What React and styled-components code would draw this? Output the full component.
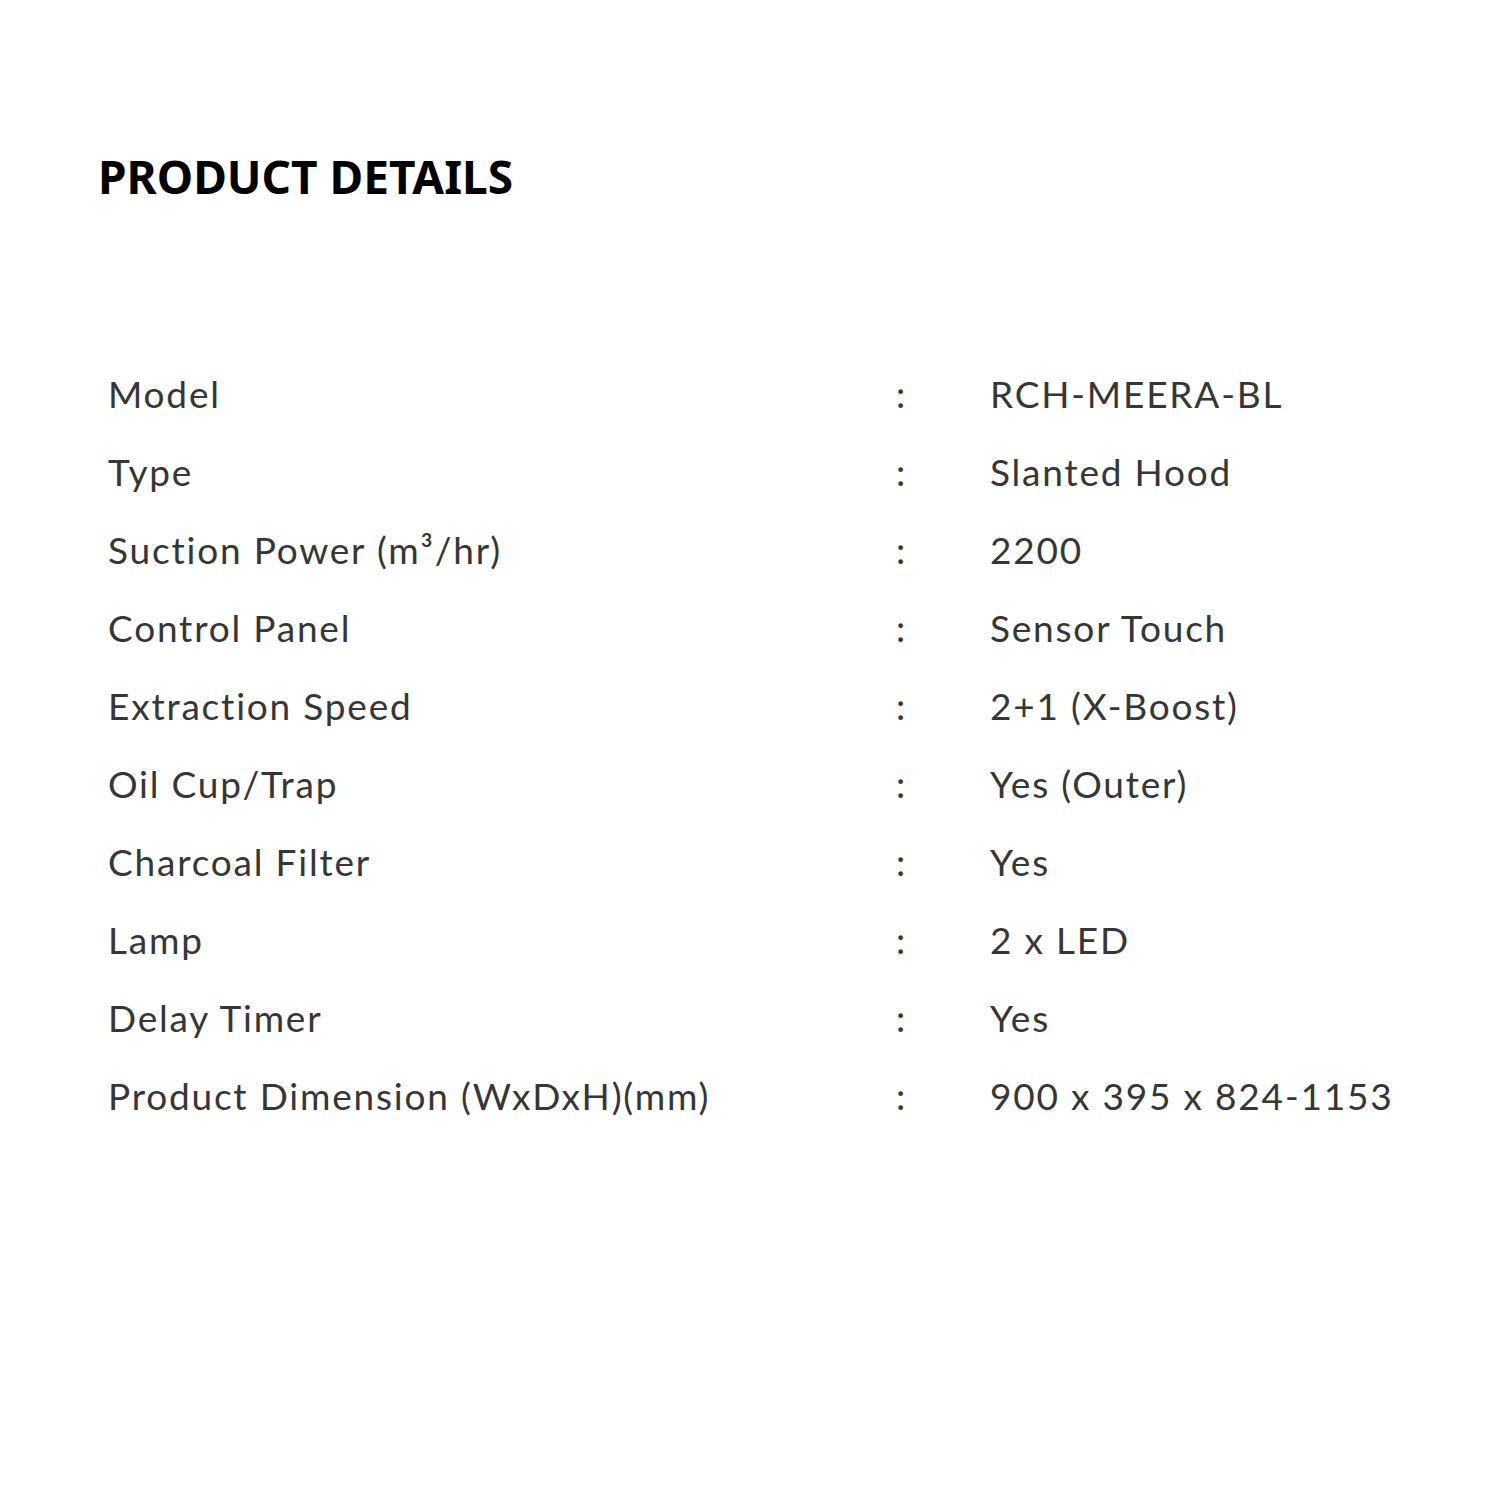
import React from 'react';
import styled, { createGlobalStyle } from 'styled-components';

const Global = createGlobalStyle`
    html, body {
        margin: 0;
        padding: 0;
        background: #fff;
    }
`;

const Page = styled.div`
    width: 1500px;
    height: 1500px;
    box-sizing: border-box;
    padding: 146px 0 0 98px;
    background: #fff;
`;

const Title = styled.h2`
    margin: 0;
    font-family: "Noto Sans", "Open Sans", sans-serif;
    font-weight: 700;
    font-size: 46px;
    line-height: 60px;
    color: #000;
`;

const Table = styled.div`
    display: grid;
    grid-template-columns: 788px 94px auto;
    margin: 149px 0 0 10px;
    font-family: Lato, "Liberation Sans", sans-serif;
    font-size: 37px;
    letter-spacing: 1.8px;
    color: #363636;
`;

const Cell = styled.div`
    height: 78px;
    line-height: 78px;
    white-space: nowrap;
`;

const rows = [
    ['Model', 'RCH-MEERA-BL'],
    ['Type', 'Slanted Hood'],
    ['Suction Power (m³/hr)', '2200'],
    ['Control Panel', 'Sensor Touch'],
    ['Extraction Speed', '2+1 (X-Boost)'],
    ['Oil Cup/Trap', 'Yes (Outer)'],
    ['Charcoal Filter', 'Yes'],
    ['Lamp', '2 x LED'],
    ['Delay Timer', 'Yes'],
    ['Product Dimension (WxDxH)(mm)', '900 x 395 x 824-1153'],
];

function App() {
    return (
        <Page>
            <Global />
            <Title>PRODUCT DETAILS</Title>
            <Table>
                {rows.map(([label, value]) => (
                    <React.Fragment key={label}>
                        <Cell>{label}</Cell>
                        <Cell>:</Cell>
                        <Cell>{value}</Cell>
                    </React.Fragment>
                ))}
            </Table>
        </Page>
    );
}

export default App;
